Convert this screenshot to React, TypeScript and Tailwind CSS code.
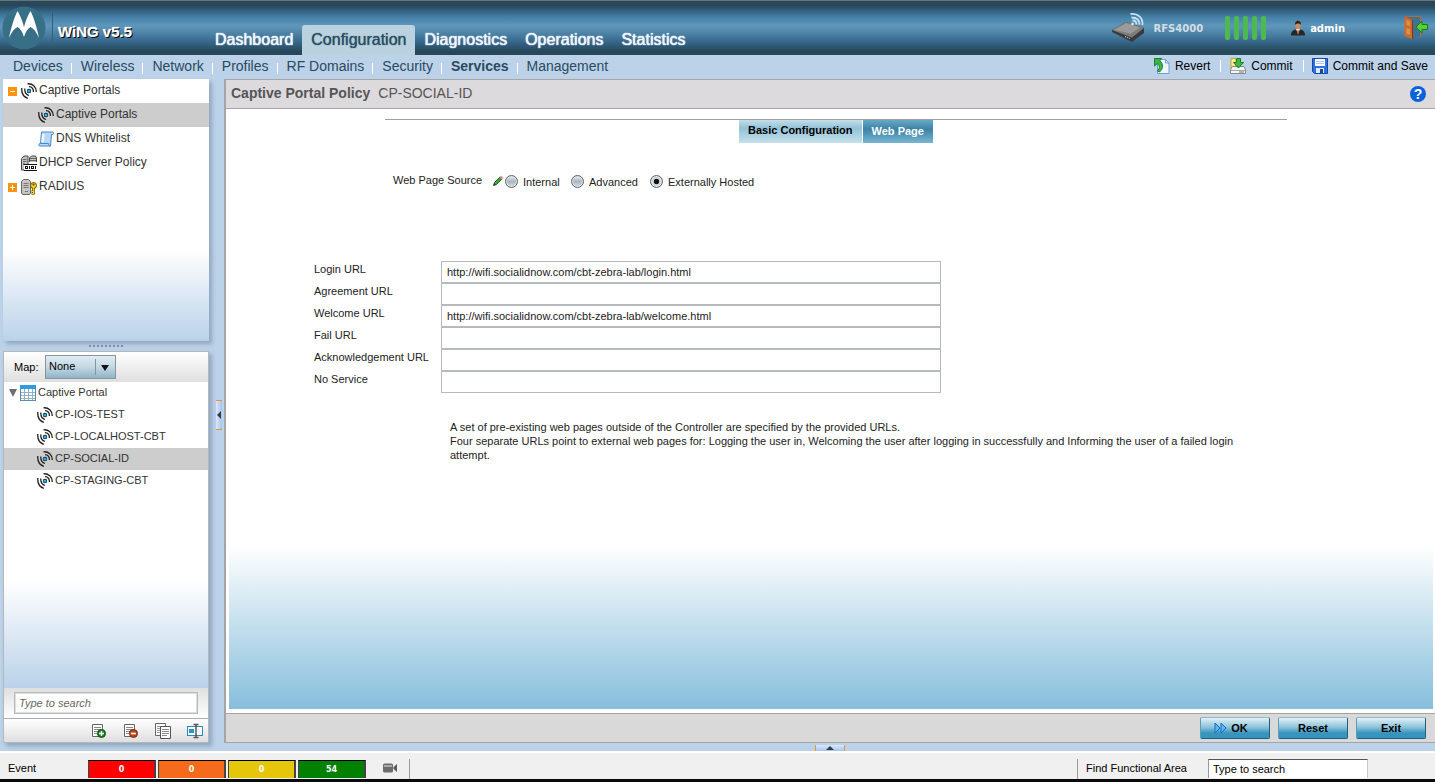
import { useState } from 'react';
import type { ReactNode } from 'react';

function SignalIcon() {
  return (
    <svg width="16" height="16" viewBox="0 0 16 16" fill="none" className="shrink-0">
      <path d="M.8 5C.4 10 2.500 13.800 6.800 15.300M3.800 5.500C3.600 9 5 11.500 8 12.500" stroke="#222" strokeWidth="1.300" />
      <path d="M6.500.8C11.500.2 15.400 4 15.200 9M8 3.700c3 .1 4.700 2.300 4.300 5.300" stroke="#222" strokeWidth="1.300" />
      <circle cx="8" cy="8" r="2.200" fill="#111" />
      <circle cx="8" cy="8" r="1.600" fill="#1fb8f2" />
    </svg>
  );
}

function ScrollIcon() {
  return (
    <svg width="16" height="16" viewBox="0 0 16 16" className="shrink-0">
      <path d="M3.500 1h11c1.500 0 1.500 2.500 0 2.500h-1L12.500 15H2C.3 15 .5 12.500 2 12.500h.5z" fill="#b9d8f7" stroke="#4b86c8" />
      <path d="M2.500 12.500h8c0 1 .3 2.500 2 2.500" fill="none" stroke="#4b86c8" />
      <path d="M5.500 3l-1 8" stroke="#eef7ff" strokeWidth="2.500" />
    </svg>
  );
}

function DhcpIcon() {
  return (
    <svg width="16" height="16" viewBox="0 0 16 16" className="shrink-0">
      <path d="M.5 15V3.500L3 1h4v14zM8.500 7V3l2-2h4l1 2v4" fill="#c3c3bd" stroke="#444" />
      <path d="M2 4.500h3.500M2 6.500h3.500M2 8.500h1.500M9 3.500h6M9 5.500h6" stroke="#666" />
      <path d="M3 9.500h13v6H3z" fill="#fff" />
      <path d="M2.500 9.500H16M3 15.500h13" stroke="#111" />
      <path d="M8.500 11v3M14.500 11v3" stroke="#111" />
      <rect x="4.500" y="11.500" width="2" height="2" fill="none" stroke="#111" />
      <rect x="10.500" y="11.500" width="2" height="2" fill="none" stroke="#111" />
    </svg>
  );
}

function RadiusIcon() {
  return (
    <svg width="16" height="16" viewBox="0 0 16 16" className="shrink-0">
      <path d="M.5 14V2.500L2.500.5h5l2 2V14l-1 1.500h-7z" fill="#c6c6c0" stroke="#666" />
      <path d="M2.500 4.500h5M2.500 6.500h5M2.500 8.500h5M4 12.500h3" stroke="#777" />
      <circle cx="12.500" cy="6.500" r="3" fill="#f3cf22" stroke="#6b5500" />
      <path d="M12.500 9v6.500M12.500 12.500h-2M12.500 14.500h-2" stroke="#6b5500" strokeWidth="2.600" />
      <path d="M12.500 9v6M12 12.500h-1.500M12 14.500h-1.500" stroke="#f3cf22" />
      <circle cx="12.500" cy="5.500" r="1" fill="#5a4800" />
    </svg>
  );
}

function TableIcon() {
  return (
    <svg width="16" height="16" viewBox="0 0 16 16" className="shrink-0">
      <rect x=".5" y=".5" width="15" height="15" fill="#fff" stroke="#5f8fae" />
      <rect width="16" height="4" fill="#2f9be0" />
      <path d="M1 7.500h14M1 10.500h14M1 13.500h14M4.500 4v11M8.500 4v11M12.500 4v11" stroke="#8fb2c8" />
    </svg>
  );
}

function Toggle({ open }: { open: boolean }) {
  return (
    <svg width="9" height="9" viewBox="0 0 9 9" className="shrink-0">
      <rect width="9" height="9" fill="#ff9310" />
      <path d={open ? 'M2 4.500h5' : 'M2 4.500h5M4.500 2v5'} stroke="#fff" />
    </svg>
  );
}

function LogoIcon() {
  return (
    <svg width="44" height="44" viewBox="0 0 44 44">
      <circle cx="22" cy="22" r="21.500" fill="#376f86" />
      <path
        d="M7 32C9 22 12 12 15.500 5c3 5 5 10 6.500 16C23.500 15 25.500 10 28.500 5 32 12 35 22 37 32c-2.500-6-5.500-9.500-8.500-11-3 1.500-5 5-6.500 10-1.500-5-3.500-8.500-6.500-10-3 1.500-6 5-8.500 11z"
        fill="#fff"
      />
    </svg>
  );
}

function RouterIcon() {
  return (
    <svg width="32" height="32" viewBox="0 0 32 32" fill="none">
      <path d="M0 18l14-8 18 6v5l-12 9L0 20z" fill="#3a3a3a" />
      <path d="M0 18l14-8 18 6-12 9.500z" fill="#7d7d7d" />
      <path d="M2 18l12-7 14 4.500-9 6z" fill="#9a9a9a" />
      <path d="M13 24.500l5 2" stroke="#eee" strokeDasharray="1 1" />
      <path d="M20.500 8.500c2.500 0 4 1.500 4 4M19.500 5.500c5 0 8 2.500 8 7M18.500 2c8-.5 12.500 4 12 11" stroke="#c5e2f4" strokeWidth="1.800" />
      <circle cx="20.500" cy="12" r="1.300" fill="#dceefa" />
    </svg>
  );
}

function AdminIcon() {
  return (
    <svg width="16" height="16" viewBox="0 0 16 16">
      <path d="M1 15.500c0-4 2-5.500 5-6h4c3 .5 5 2 5 6z" fill="#262626" />
      <path d="M6 9h4l-2 5z" fill="#f4f4f4" />
      <path d="M7.500 10h1l.5 3-1 1.500L7 13z" fill="#c35b28" />
      <ellipse cx="8" cy="5.500" rx="2.700" ry="3.700" fill="#c98d63" />
      <path d="M5 5C4.500-.8 11.500-.8 11 5 10 3 6.500 3 5 5z" fill="#302018" />
    </svg>
  );
}

function ExitIcon() {
  return (
    <svg width="24" height="24" viewBox="0 0 24 24">
      <path d="M2 21V1h14v20z" fill="#3f7294" />
      <path d="M1 .5h15.500V8M16.500 16v5" fill="none" stroke="#b86a35" />
      <path d="M.5.500L8 4v19l-7.500-3z" fill="#cf6d28" />
      <path d="M2.500 4L6 5.500V10l-3.500-1zM2.500 12L6 13v6l-3.500-1.500z" fill="#e38d4d" />
      <path d="M8.500 4v19" stroke="#7d3c12" />
      <path d="M12 11l6-6v3.500h5.500v5H18V17z" fill="#53d032" stroke="#187c12" />
    </svg>
  );
}

function RevertIcon() {
  return (
    <svg width="16" height="16" viewBox="0 0 16 16">
      <path d="M3.500 1.500h8l3.500 3.500v10.500H3.500z" fill="#edf6ff" stroke="#6f9fd2" />
      <path d="M11.500 1.500V5H15" fill="none" stroke="#6f9fd2" />
      <path d="M.5.500h7L5.800 2.800C9.500 6 9.500 10.500 5.500 14L3.500 13C6 10 6 7.500 3.300 5.500L.5 8z" fill="#3bb54a" stroke="#16802a" />
    </svg>
  );
}

function CommitIcon() {
  return (
    <svg width="16" height="16" viewBox="0 0 16 16">
      <path d="M1 10V.5h5V10" fill="#ffe98a" stroke="#c9a634" />
      <path d="M2 8.500h12l1.500 3.500v3.500H.5V12z" fill="#f3f3f3" stroke="#8a8a8a" />
      <path d="M1 12.500h14" stroke="#aaa" />
      <path d="M9 14h5" stroke="#777" />
      <path d="M6.500.500h4v4h3L8.500 10l-5-5.500h3z" fill="#3fb93f" stroke="#1a8022" />
    </svg>
  );
}

function SaveIcon() {
  return (
    <svg width="16" height="16" viewBox="0 0 16 16">
      <path d="M.5.500h15v15H2.500l-2-2z" fill="#2f6fe4" stroke="#1746a8" />
      <rect x="3" y="1" width="10" height="7" fill="#fff" />
      <path d="M4 3.500h8M4 5.500h8" stroke="#a9c3ea" />
      <rect x="4" y="10" width="8" height="5" fill="#e3e9f2" />
      <rect x="8" y="11" width="3" height="4" fill="#1746a8" />
    </svg>
  );
}

function PageIcon({ kind }: { kind: 'add' | 'remove' }) {
  return (
    <svg width="16" height="16" viewBox="0 0 16 16">
      <path d="M1.500 1.500h10v12h-10z" fill="#fff" stroke="#666" />
      <path d="M3 4.500h7M3 6.500h7M3 8.500h4M3 10.500h3" stroke="#888" />
      <circle cx="10.500" cy="10.500" r="4" fill={kind === 'add' ? '#178217' : '#c2451c'} stroke={kind === 'add' ? '#0c520c' : '#7c2508'} />
      <path d={kind === 'add' ? 'M8 10.500h5M10.500 8v5' : 'M8 10.500h5'} stroke="#fff" strokeWidth="1.500" />
    </svg>
  );
}

function CopyIcon() {
  return (
    <svg width="16" height="16" viewBox="0 0 16 16">
      <path d="M.5.500h10v12H.5z" fill="#fff" stroke="#666" />
      <path d="M2 3.500h7M2 5.500h3M2 7.500h3M2 9.500h3" stroke="#999" />
      <path d="M5.500 3.500h10v12h-10z" fill="#fff" stroke="#555" />
      <path d="M7 6.500h7M7 8.500h7M7 10.500h7M7 12.500h5" stroke="#888" />
    </svg>
  );
}

function RenameIcon() {
  return (
    <svg width="16" height="16" viewBox="0 0 16 16">
      <rect x=".5" y="3.500" width="15" height="9" fill="#fff" stroke="#2b87bd" />
      <rect x="2" y="6" width="5" height="4" fill="#2496d8" />
      <path d="M9 2v12M6.500 1.500h5M6.500 14.500h5" stroke="#555" strokeWidth="1.500" />
    </svg>
  );
}

function PencilIcon() {
  return (
    <svg width="12" height="12" viewBox="0 0 12 12">
      <path d="M2 10l.5-2.500L8 2l2 2-5.500 5.500z" fill="#3fa33a" stroke="#1d6d1d" />
      <path d="M7.500 2L10 4.500 11.500 3 9 .5z" fill="#d99" />
      <path d="M1 11l1-3 2 2z" fill="#333" />
    </svg>
  );
}

function CameraIcon() {
  return (
    <svg width="15" height="10" viewBox="0 0 15 10">
      <rect y=".5" width="10" height="9" rx="1.500" fill="#6b6b6b" />
      <path d="M1 3h8" stroke="#a9a9a9" strokeWidth="2" />
      <path d="M10.500 4L14 1v8l-3.500-3z" fill="#5d5d5d" />
    </svg>
  );
}

const topTabs = ['Dashboard', 'Configuration', 'Diagnostics', 'Operations', 'Statistics'];
const subTabs = ['Devices', 'Wireless', 'Network', 'Profiles', 'RF Domains', 'Security', 'Services', 'Management'];
const portals = ['CP-IOS-TEST', 'CP-LOCALHOST-CBT', 'CP-SOCIAL-ID', 'CP-STAGING-CBT'];

const urlFields = [
  { id: 'login', label: 'Login URL', value: 'http://wifi.socialidnow.com/cbt-zebra-lab/login.html' },
  { id: 'agreement', label: 'Agreement URL', value: '' },
  { id: 'welcome', label: 'Welcome URL', value: 'http://wifi.socialidnow.com/cbt-zebra-lab/welcome.html' },
  { id: 'fail', label: 'Fail URL', value: '' },
  { id: 'ack', label: 'Acknowledgement URL', value: '' },
  { id: 'noservice', label: 'No Service', value: '' },
];

const events = [
  { name: 'Critical', count: 0, color: 'bg-[#fe0000]' },
  { name: 'Major', count: 0, color: 'bg-[#f66a1c]' },
  { name: 'Minor', count: 0, color: 'bg-[#e6c60a]' },
  { name: 'Normal', count: 54, color: 'bg-[#028002]' },
];

function Header() {
  return (
    <header className="flex h-[55px] border-t border-[#6f7274] bg-[linear-gradient(#27485c_0%,#27485c_9%,#4580a8_30%,#5f97bb_46%,#4a7fa3_62%,#37688c_75%,#264659_94%)]">
      <div className="flex w-[206px] shrink-0 items-start pt-[5px] pl-[2px]">
        <LogoIcon />
        <div className="mt-1 ml-1.5 h-[36px] w-px bg-[#2f6478]" />
        <span className="mt-4 ml-[5px] text-[15px] leading-5 font-bold text-white [text-shadow:1px_1px_0_#000,0_0_1px_#fff]">WiNG v5.5</span>
      </div>
      <nav className="flex items-end">
        {topTabs.map((tab) => (
          <a
            key={tab}
            href="#"
            className={`h-[30px] px-[9px] text-base leading-[30px] whitespace-nowrap ${
              tab === 'Configuration'
                ? 'rounded-t-[3px] bg-[#bad2df] text-[#2a4d63] [text-shadow:0_0_1px_#2a4d63]'
                : 'text-[#eef5fa] [text-shadow:0_0_1px_#eef5fa,0_0_1px_#eef5fa]'
            }`}
          >
            {tab}
          </a>
        ))}
      </nav>
      <div className="ml-auto flex h-[54px] items-center pr-[7px] font-['DejaVu_Sans',sans-serif] text-[10px] font-bold">
        <RouterIcon />
        <span className="ml-2.5 text-[#d3dde4]">RFS4000</span>
        <div className="ml-[22px] flex gap-1">
          {[1, 2, 3, 4, 5].map((n) => (
            <span key={n} className="h-6 w-[5px] rounded-xs bg-[#4cba4f]" />
          ))}
        </div>
        <div className="ml-6 flex items-center gap-1 text-white">
          <AdminIcon />
          admin
        </div>
        <button aria-label="Log out" className="ml-[59px]">
          <ExitIcon />
        </button>
      </div>
    </header>
  );
}

function SubNav() {
  return (
    <div className="flex h-6 items-center justify-between pr-[7px] pb-0.5 pl-[13px]">
      <nav className="flex items-center text-sm leading-5 text-[#2b4a60]">
        {subTabs.map((tab, i) => (
          <div key={tab} className="flex items-center">
            {i > 0 && <span className="mt-1 mr-[9px] ml-2 h-[11px] w-px bg-white" />}
            <a href="#" className={`whitespace-nowrap ${tab === 'Services' ? 'font-bold' : ''}`}>
              {tab}
            </a>
          </div>
        ))}
      </nav>
      <div className="flex items-center text-xs text-black">
        <button className="flex items-center gap-[5px]">
          <RevertIcon />
          Revert
        </button>
        <span className="mr-[9px] ml-2.5 h-3 w-px bg-white" />
        <button className="flex items-center gap-[5px]">
          <CommitIcon />
          Commit
        </button>
        <span className="mr-2 ml-2.5 h-3 w-px bg-white" />
        <button className="flex items-center gap-[5px] whitespace-nowrap">
          <SaveIcon />
          Commit and Save
        </button>
      </div>
    </div>
  );
}

function TreeRow({ icon, toggle, label, nested, selected }: {
  icon: ReactNode;
  toggle?: ReactNode;
  label: string;
  nested?: boolean;
  selected?: boolean;
}) {
  return (
    <li>
      <button className={`flex h-6 w-full items-center gap-0.5 text-left text-xs ${nested ? 'pl-[35px]' : 'pl-[5px]'} ${selected ? 'bg-[#cdcdcd]' : ''}`}>
        {!nested && <span className="w-[11px]">{toggle}</span>}
        {icon}
        <span className="pb-0.5">{label}</span>
      </button>
    </li>
  );
}

function Sidebar() {
  return (
    <aside className="flex w-[209px] shrink-0 flex-col pb-2 pl-[3px] text-[#333]">
      <div className="h-[262px] bg-[linear-gradient(#fff_65%,#bad2e9)] shadow-[3px_3px_4px_#8fa8bf]">
        <ul>
          <TreeRow icon={<SignalIcon />} toggle={<Toggle open />} label="Captive Portals" />
          <TreeRow icon={<SignalIcon />} label="Captive Portals" nested selected />
          <TreeRow icon={<ScrollIcon />} label="DNS Whitelist" nested />
          <TreeRow icon={<DhcpIcon />} label="DHCP Server Policy" />
          <TreeRow icon={<RadiusIcon />} toggle={<Toggle open={false} />} label="RADIUS" />
        </ul>
      </div>
      <div className="flex h-2.5 items-center justify-center gap-0.5">
        {Array.from({ length: 9 }, (_, i) => (
          <span key={i} className="size-0.5 bg-[#7d93a6]" />
        ))}
      </div>
      <div className="flex flex-1 flex-col border border-[#b3b8bb] bg-white text-[11px] shadow-[3px_3px_4px_#8fa8bf]">
        <div className="flex h-[30px] items-center bg-[linear-gradient(#fff,#dfdfdf)] pl-2.5 text-black">
          <label htmlFor="map" className="w-[31px]">Map:</label>
          <div className="relative">
            <select
              id="map"
              defaultValue="None"
              className="h-6 w-[71px] appearance-none border border-[#8b9499] bg-[linear-gradient(#dfecf3,#c4d8e3_50%,#8fb4c8)] pb-0.5 pl-[3px] text-[11px]"
            >
              <option>None</option>
            </select>
            <span className="pointer-events-none absolute top-1 right-5 h-4 w-px bg-[#8b9499]" />
            <svg width="8" height="6" viewBox="0 0 8 6" className="pointer-events-none absolute top-2.5 right-[7px]">
              <path d="M0 0h8L4 6z" fill="#111" />
            </svg>
          </div>
        </div>
        <ul className="min-h-[305px] flex-1 bg-[linear-gradient(#fff_65%,#bad2e9)]">
          <li className="flex h-[22px] items-center pl-[5px]">
            <svg width="8" height="8" viewBox="0 0 8 8">
              <path d="M0 0h8L4 8z" fill="#6a6f72" />
            </svg>
            <span className="ml-[3px] flex items-center gap-0.5">
              <TableIcon />
              <span className="pb-0.5">Captive Portal</span>
            </span>
          </li>
          {portals.map((name) => (
            <li key={name}>
              <button className={`flex h-[22px] w-full items-center gap-0.5 pl-[33px] text-left ${name === 'CP-SOCIAL-ID' ? 'bg-[#cdcdcd]' : ''}`}>
                <SignalIcon />
                <span className="pb-0.5">{name}</span>
              </button>
            </li>
          ))}
        </ul>
        <div className="h-[31px] border-b border-[#a9adaf] bg-[linear-gradient(#dfdfdf,#fff)] px-2.5 pt-1">
          <input
            aria-label="Search portals"
            placeholder="Type to search"
            className="h-[22px] w-full border border-[#b7babc] bg-white px-1 text-[11px] italic shadow-[inset_0_0_0_1px_#dcdfe0] outline-none placeholder:text-[#666]"
          />
        </div>
        <div className="flex h-[23px] items-center justify-end gap-4 bg-[linear-gradient(#fff,#dfdfdf)] pr-[5px]">
          <button aria-label="Add"><PageIcon kind="add" /></button>
          <button aria-label="Remove"><PageIcon kind="remove" /></button>
          <button aria-label="Copy"><CopyIcon /></button>
          <button aria-label="Rename"><RenameIcon /></button>
        </div>
      </div>
    </aside>
  );
}

function RadioOption({ label, checked, onChange, className }: {
  label: string;
  checked: boolean;
  onChange: () => void;
  className: string;
}) {
  return (
    <label className={`flex items-center gap-[5px] whitespace-nowrap ${className}`}>
      <input
        type="radio"
        name="source"
        checked={checked}
        onChange={onChange}
        className="size-[13px] appearance-none rounded-full border border-[#5c6266] bg-[linear-gradient(#e8eef1,#a9b7bf_50%,#d5dde1)] shadow-[inset_0_0_0_1px_#dfe5e8] checked:bg-[radial-gradient(circle,#111_30%,#cfd8dc_40%)]"
      />
      <span className="pt-0.5">{label}</span>
    </label>
  );
}

const actionClass =
  'flex h-[22px] w-[70px] items-center justify-center rounded-xs border border-t-[#8fb9cb] border-r-[#1f5f7c] border-b-[#1f5f7c] border-l-[#5b9cb8] bg-[linear-gradient(#e2f1f7,#8fc4da_45%,#3795bd_75%)] text-[11px] font-bold text-black';

function PolicyPanel() {
  const [source, setSource] = useState('Externally Hosted');

  return (
    <main className="flex min-w-0 flex-1 flex-col">
      <div className="flex flex-1 flex-col border-l-2 border-[#a5a5a5] bg-white">
        <div className="flex h-[30px] shrink-0 items-center justify-between border-y border-[#a5a5a5] bg-[#dddadd] pr-[9px] pl-[5px] text-sm text-[#555]">
          <h1 className="pb-0.5">
            <b>Captive Portal Policy</b>
            <span className="ml-2">CP-SOCIAL-ID</span>
          </h1>
          <button aria-label="Help" className="size-4 rounded-full bg-[#0b63dc] text-sm leading-4 font-bold text-white">?</button>
        </div>

        <div className="mr-0.5 mb-1 ml-[3px] flex-1 bg-[linear-gradient(to_top,#86bedc,#fff_164px)] pb-8 text-[11px] text-[#222]">
          <div className="mt-2.5 mr-[146px] ml-[156px] flex justify-center gap-px border-t border-[#a0a0a0] font-bold">
            <button className="h-[23px] bg-[linear-gradient(#c3dfea,#93c2d7_35%,#c5e0eb)] px-[9px] pb-0.5 text-black">Basic Configuration</button>
            <button className="h-[23px] bg-[linear-gradient(#68a8c6,#3b83a6_40%,#79b5d2)] px-[9px] text-white">Web Page</button>
          </div>

          <fieldset className="mt-[30px] ml-[164px] flex h-4 items-center">
            <span className="w-[99px] pb-0.5">Web Page Source</span>
            <PencilIcon />
            <RadioOption label="Internal" checked={source === 'Internal'} onChange={() => setSource('Internal')} className="ml-px w-[66px]" />
            <RadioOption label="Advanced" checked={source === 'Advanced'} onChange={() => setSource('Advanced')} className="w-[79px]" />
            <RadioOption label="Externally Hosted" checked={source === 'Externally Hosted'} onChange={() => setSource('Externally Hosted')} className="" />
          </fieldset>

          <div className="mt-[72px] ml-[85px]">
            {urlFields.map((f) => (
              <div key={f.id} className="flex h-[22px]">
                <label htmlFor={f.id} className="w-[127px] shrink-0 leading-4">{f.label}</label>
                <input
                  id={f.id}
                  defaultValue={f.value}
                  className="h-[22px] w-full max-w-[500px] border border-[#b7babc] bg-white px-[5px] outline-none"
                />
              </div>
            ))}
          </div>

          <p className="mt-[27px] ml-[221px] max-w-[800px] leading-[14px]">
            A set of pre-existing web pages outside of the Controller are specified by the provided URLs.
            <br />
            Four separate URLs point to external web pages for: Logging the user in, Welcoming the user after logging in successfully and Informing the user of a failed login attempt.
          </p>
        </div>

        <div className="flex h-[30px] shrink-0 items-center justify-end gap-2 border-y border-[#a5a5a5] bg-[#d9d9d9] pr-[9px]">
          <button className={actionClass}>
            <svg width="13" height="12" viewBox="0 0 13 12" className="mr-1">
              <path d="M1 1l5 5-5 5zM7 1l5 5-5 5z" fill="#5cb6f2" stroke="#1b6fc0" />
            </svg>
            <span className="pr-2">OK</span>
          </button>
          <button className={actionClass}>Reset</button>
          <button className={actionClass}>Exit</button>
        </div>
      </div>
      <div className="flex h-2 items-end justify-center">
        <button aria-label="Expand event panel" className="flex h-1.5 w-[30px] items-center justify-center border-x border-[#f0941e] bg-[linear-gradient(#dbe8fb,#a3c3ef)]">
          <svg width="8" height="4" viewBox="0 0 8 4">
            <path d="M0 4h8L4 0z" fill="#333c48" />
          </svg>
        </button>
      </div>
    </main>
  );
}

function EventBar() {
  return (
    <footer className="flex h-[31px] items-center border-t-2 border-b-[3px] border-t-white border-b-[#0a0a0c] bg-[#f0f0f0] text-[11px] text-black">
      <span className="w-20 pl-2 pt-1">Event</span>
      <div className="ml-2 flex gap-0.5 self-end pb-px">
        {events.map((e) => (
          <button
            key={e.name}
            aria-label={`${e.name} events`}
            className={`h-[18px] w-[68px] border-t border-r-2 border-l border-t-black border-r-[#444] border-l-[#444] font-['DejaVu_Sans',sans-serif] text-[8px] font-bold text-white ${e.color}`}
          >
            {e.count}
          </button>
        ))}
      </div>
      <button aria-label="Record" className="mt-1 ml-[17px]">
        <CameraIcon />
      </button>
      <span className="ml-[11px] h-5 w-px self-end bg-[#9b9b9b]" />
      <div className="mr-[67px] ml-auto flex h-5 self-end border-l border-[#9b9b9b] pl-2">
        <label htmlFor="find" className="w-[122px] pt-px leading-4">Find Functional Area</label>
        <input
          id="find"
          placeholder="Type to search"
          className="h-[19px] w-40 border border-b-0 border-t-[#555] border-r-[#c3ccd2] border-l-[#999] bg-white px-1 outline-none placeholder:text-black"
        />
      </div>
    </footer>
  );
}

export default function App() {
  return (
    <div className="flex min-h-screen flex-col bg-[#bbd2e9] font-['Liberation_Sans',Arial,sans-serif]">
      <Header />
      <SubNav />
      <div className="flex flex-1">
        <Sidebar />
        <div className="flex w-[15px] shrink-0 items-center justify-end pr-0.5">
          <button aria-label="Collapse sidebar" className="flex h-[30px] w-1.5 items-center justify-center border-y border-[#f0941e] bg-[linear-gradient(to_right,#dbe8fb,#a3c3ef)]">
            <svg width="4" height="8" viewBox="0 0 4 8">
              <path d="M4 0v8L0 4z" fill="#333c48" />
            </svg>
          </button>
        </div>
        <PolicyPanel />
      </div>
      <EventBar />
    </div>
  );
}
